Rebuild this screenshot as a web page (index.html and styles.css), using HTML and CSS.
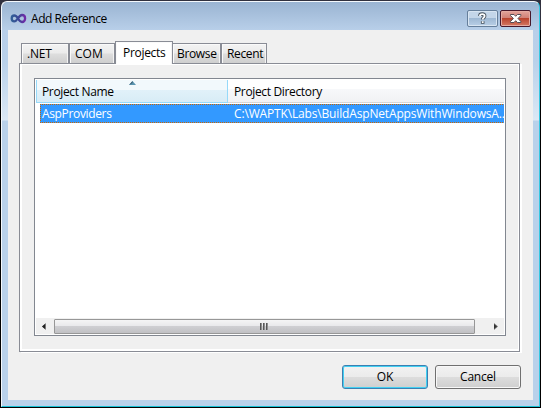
FILE: index.html
```html
<!DOCTYPE html>
<html lang="en">
<head>
<meta charset="utf-8">
<title>Add Reference</title>
<link rel="stylesheet" href="styles.css">
</head>
<body>
<main class="window">
  <header class="titlebar">
    <svg class="logo" width="17" height="11" viewBox="0 0 17 11">
      <defs><linearGradient id="loop"><stop offset="0" stop-color="#315e96"/><stop offset=".5" stop-color="#3a4796"/><stop offset="1" stop-color="#722aa8"/></linearGradient></defs>
      <path d="M8 5.5C6.8 3.4 5.7 2.5 4.3 2.5C2.7 2.5 1.7 3.8 1.7 5.4S2.8 8.3 4.3 8.3C7.5 8.3 8.4 2 12 2C14 2 15.1 3.5 15.1 5.4S13.9 9 12 9C10.4 9 9.2 7.6 8 5.5Z" fill="none" stroke="url(#loop)" stroke-width="2.3"/>
    </svg>
    <h1><span class="t title-text">Add Reference</span></h1>
    <button class="caption help" aria-label="Help"><svg width="29" height="15" viewBox="0 0 29 15"><path d="M12 5V4.5C12 3.5 13 3.1 14.2 3.1S16.6 3.7 16.6 5C16.6 6.7 14.7 6.6 14.7 8.6M14.7 10.3V12.8" fill="none" stroke="#48545f" stroke-width="3.6"/><path d="M12 5V4.5C12 3.5 13 3.1 14.2 3.1S16.6 3.7 16.6 5C16.6 6.7 14.7 6.6 14.7 8.5M14.7 10.2V11.9" fill="none" stroke="#fff" stroke-width="1.8"/></svg></button>
    <button class="caption close" aria-label="Close"><svg width="29" height="15" viewBox="0 0 29 15"><path d="M9.5 3.5H13L14.7 5.3L16.4 3.5H19.8V4.6L17 7.5L19.8 10.4V11.5H16.4L14.7 9.7L13 11.5H9.5V10.4L12.4 7.5L9.5 4.6Z" fill="#fff" stroke="#554d55"/></svg></button>
  </header>
  <section class="client">
    <nav class="tabs">
      <div class="tab net"><span class="t">.NET</span></div>
      <div class="tab com"><span class="t">COM</span></div>
      <div class="tab projects"><span class="t">Projects</span></div>
      <div class="tab browse"><span class="t">Browse</span></div>
      <div class="tab recent"><span class="t">Recent</span></div>
    </nav>
    <section class="panel">
      <div class="list">
        <div class="head">
          <div class="name"><span class="t">Project Name</span><svg class="sort" width="7" height="4" viewBox="0 0 7 4"><path d="M0 4L3.5 0L7 4Z" fill="#5b96b0"/><path d="M0 4L3.5 0V2Z" fill="#34566c"/></svg></div>
          <div class="dir"><span class="t">Project Directory</span></div>
        </div>
        <div class="row"><span class="t">AspProviders</span><span class="t path">C:\WAPTK\Labs\BuildAspNetAppsWithWindowsA..</span></div>
        <div class="scroll">
          <svg class="arrow" width="4" height="7" viewBox="0 0 4 7"><path d="M4 0V7L0 3.5Z" fill="#777"/><path d="M3 1V6L0 3.5Z" fill="#222"/></svg>
          <div class="thumb"><i></i><i></i><i></i></div>
          <svg class="arrow right" width="4" height="7" viewBox="0 0 4 7"><path d="M0 0V7L4 3.5Z" fill="#777"/><path d="M0 1V6L3 3.5Z" fill="#333"/></svg>
        </div>
      </div>
    </section>
    <footer>
      <button class="btn ok"><span class="t">OK</span></button>
      <button class="btn"><span class="t">Cancel</span></button>
    </footer>
  </section>
</main>
</body>
</html>
```
FILE: styles.css
```css
* { box-sizing: border-box; }
body {
  margin: 0;
  width: 541px;
  height: 408px;
  padding: 1px 1px 1px;
  overflow: hidden;
  background: linear-gradient(#30303e 0 30px, #000 30px);
  font: 12px/16px "Open Sans", sans-serif;
  color: #000;
}
button { font: inherit; color: inherit; padding: 0; }
svg { display: block; flex: none; }
.t { display: block; white-space: nowrap; letter-spacing: -0.35px; }
.title-text { letter-spacing: -0.46px; }
.t.path { letter-spacing: -0.16px; padding-left: 1px; }
.window {
  height: 406px;
  border: 1px solid #f4f8fc;
  border-right-color: #36c8e2;
  border-bottom-color: #16c0d4;
  border-radius: 6px 6px 0 0;
  padding: 0 6px 6px;
  background: linear-gradient(#9ab4d2 0, #b8cfe9 28px, #b9d1ea 60px, #dbe8f5 118px, #b9d1ea 119px);
}
.titlebar {
  height: 28px;
  display: flex;
  padding: 8px 2px 0;
  align-items: flex-start;
}
.logo { margin-top: 3px; }
h1 { flex: 1; margin: 1px 0 0 4px; font: inherit; }
.caption {
  width: 31px;
  height: 17px;
  margin-left: 2px;
  border: 1px solid #667f9b;
  border-radius: 2px;
  background: linear-gradient(#c4d6e9 0 7px, #9db7d2 7px, #b9cfe6);
  box-shadow: inset 0 0 0 1px #d8e5f2;
}
.close {
  border-color: #47172a;
  background: linear-gradient(#e3a49b, #d18076 7px, #b9402b 7px, #d57963);
  box-shadow: inset 0 0 0 1px #e5aaa1;
}
.client {
  height: 370px;
  background: #f0f0f0;
  padding: 11px 13px 0 11px;
}
.tabs {
  display: flex;
  height: 22px;
  align-items: flex-end;
  padding-left: 2px;
}
.tab {
  height: 20px;
  border: 1px solid #898c95;
  border-bottom: 0;
  padding: 2px 0 0 5px;
  background: linear-gradient(#f3f3f3, #ebebeb 9px, #dddddd 10px, #cfcfcf);
  box-shadow: inset 1px 1px #fafafa, inset -1px 0 #f3f3f3;
}
.net { width: 48px; }
.net .t { letter-spacing: -0.2px; }
.com { width: 46px; }
.com .t { letter-spacing: 0; }
.projects {
  width: 58px;
  height: 23px;
  margin-bottom: -1px;
  padding: 3px 0 0 7px;
  background: #fff;
  position: relative;
}
.projects .t { letter-spacing: -0.3px; }
.browse { width: 48px; border-left: 0; padding-left: 4px; }
.recent { width: 46px; }
.panel {
  width: 501px;
  height: 289px;
  border: 1px solid #898c95;
  padding: 14px;
  background: #f0f0f0;
  box-shadow: inset 2px 1px #fff, inset -1px -2px #fff, 2px 1px #fff;
}
.list {
  width: 472px;
  height: 258px;
  border: 1px solid #828790;
  padding: 1px;
  background: #fff;
  display: flex;
  flex-direction: column;
}
.head { height: 23px; display: flex; flex: none; }
.name {
  width: 192px;
  padding: 4px 0 0 5px;
  border: 1px solid #96d9f9;
  border-top: 0;
  background: linear-gradient(#f2f9fc 0 10px, #e1f1f9 10px, #d8ecf6);
  position: relative;
}
.sort { position: absolute; left: 92px; top: 1px; }
.dir {
  flex: 1;
  padding: 4px 0 0 6px;
  background: linear-gradient(#fff 0 9px, #f7f8fa 9px, #f1f2f4);
  border-bottom: 1px solid #d5d5d5;
}
.row {
  flex: none;
  height: 19px;
  margin: 1px 0 0 4px;
  display: grid;
  grid-template-columns: 191px 1fr;
  padding: 2px 0 0 2px;
  background:
    linear-gradient(90deg, #cc6600 50%, #3399ff 50%) 0 0 / 2px 1px repeat-x,
    linear-gradient(90deg, #cc6600 50%, #3399ff 50%) 0 100% / 2px 1px repeat-x,
    linear-gradient(#cc6600 50%, #3399ff 50%) 0 0 / 1px 2px repeat-y,
    #3399ff;
  color: #fff;
  overflow: hidden;
}
.scroll {
  height: 16px;
  margin-top: auto;
  display: flex;
  align-items: center;
  background: #f0f0f0;
  padding-left: 6px;
}
.thumb {
  width: 421px;
  height: 15px;
  margin: 0 19px 0 8px;
  border: 1px solid #979797;
  border-radius: 1px;
  background: linear-gradient(#f5f5f5, #e9e9eb 6px, #d0d0d3 6px, #c1c1c4);
  display: flex;
  align-items: center;
  justify-content: center;
  gap: 1px;
  padding-right: 2px;
}
.thumb i { width: 2px; height: 7px; background: linear-gradient(90deg, #3d3d3d, #aaa); }
footer {
  display: flex;
  justify-content: flex-end;
  gap: 7px;
  margin: 13px -1px 0 0;
}
.btn {
  width: 86px;
  height: 24px;
  border: 1px solid #707070;
  border-radius: 3px;
  background: linear-gradient(#f2f2f2, #ebebeb 11px, #dddddd 11px, #cfcfcf);
  box-shadow: inset 0 0 0 1px #f8f8f8;
  text-align: center;
}
.btn .t { letter-spacing: -0.2px; }
.ok { border-color: #3c7fb1; box-shadow: inset 0 0 0 1px #42d0f2; }
```
